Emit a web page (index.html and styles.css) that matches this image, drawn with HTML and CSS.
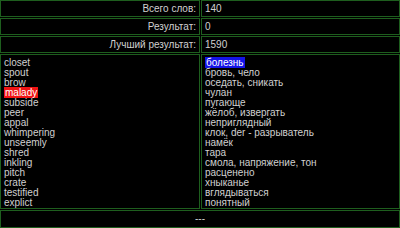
FILE: index.html
```html
<!DOCTYPE html>
<html>
    <head>
        <title>Слова</title>
        <link rel="stylesheet" href="styles.css">
    </head>
    <body>
        <div class="board">
            <div class="board__cell board__cell--label">Всего слов:</div>
            <div class="board__cell board__cell--value">140</div>
            <div class="board__cell board__cell--label">Результат:</div>
            <div class="board__cell board__cell--value">0</div>
            <div class="board__cell board__cell--label">Лучший результат:</div>
            <div class="board__cell board__cell--value">1590</div>

            <ul class="board__cell words">
                <li class="words__item">closet</li>
                <li class="words__item">spout</li>
                <li class="words__item">brow</li>
                <li class="words__item"><span class="words__mark words__mark--wrong">malady</span></li>
                <li class="words__item">subside</li>
                <li class="words__item">peer</li>
                <li class="words__item">appal</li>
                <li class="words__item">whimpering</li>
                <li class="words__item">unseemly</li>
                <li class="words__item">shred</li>
                <li class="words__item">inkling</li>
                <li class="words__item">pitch</li>
                <li class="words__item">crate</li>
                <li class="words__item">testified</li>
                <li class="words__item">explict</li>
            </ul>
            <ul class="board__cell words">
                <li class="words__item"><span class="words__mark words__mark--picked">болезнь</span></li>
                <li class="words__item">бровь, чело</li>
                <li class="words__item">оседать, сникать</li>
                <li class="words__item">чулан</li>
                <li class="words__item">пугающе</li>
                <li class="words__item">жёлоб, извергать</li>
                <li class="words__item">неприглядный</li>
                <li class="words__item">клок, der - разрыватель</li>
                <li class="words__item">намёк</li>
                <li class="words__item">тара</li>
                <li class="words__item">смола, напряжение, тон</li>
                <li class="words__item">расценено</li>
                <li class="words__item">хныканье</li>
                <li class="words__item">вглядываться</li>
                <li class="words__item">понятный</li>
            </ul>

            <div class="board__cell board__cell--footer">---</div>
        </div>
    </body>
</html>
```

FILE: styles.css
```css
* {
  box-sizing: border-box;
  margin: 0;
  padding: 0;
}

body {
  font-family: "Liberation Sans Narrow", "Liberation Sans", Arial, sans-serif;
  font-size: 10px;
  background-color: #000;
  color: #d0d0d0;
}

.board {
  display: grid;
  grid-template-columns: 200px 1fr;
  gap: 1px;
}

.board__cell {
  border: 1px solid #1e5e1e;
  line-height: 15px;
}

.board__cell--label {
  text-align: right;
  padding-right: 3px;
}

.board__cell--value {
  padding-left: 3px;
}

.board__cell--footer {
  grid-column: 1 / 3;
  text-align: center;
  line-height: 16px;
}

.words {
  list-style: none;
  padding: 3px 3px 0;
  line-height: 10px;
}

.words__mark {
  color: #fff;
  padding: 0 1px;
}

.words__mark--wrong {
  background-color: #f01414;
}

.words__mark--picked {
  background-color: #1414e6;
}
```
